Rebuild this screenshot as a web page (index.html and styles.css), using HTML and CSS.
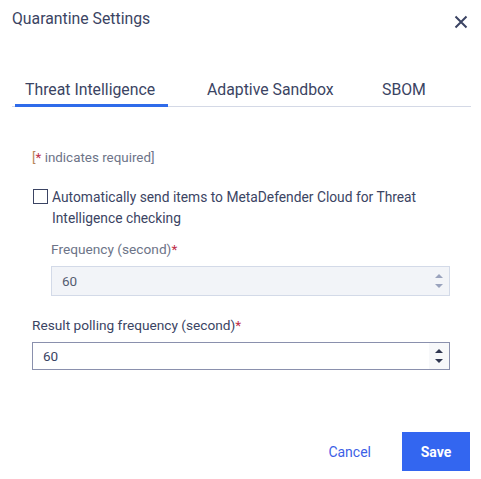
FILE: index.html
```html
<!DOCTYPE html>
<html>
<head>
<meta charset="utf-8">
<link rel="stylesheet" href="styles.css">
</head>
<body>
<div class="dialog">
  <div class="header">
    <div class="title">Quarantine Settings</div>
    <svg class="close" width="14" height="14" viewBox="0 0 14 14"><path d="M1.5 1.5L12.5 12.5M12.5 1.5L1.5 12.5" stroke="#3b4463" stroke-width="2" stroke-linecap="butt"/></svg>
  </div>
  <div class="tabs">
    <div class="tab active">Threat Intelligence</div>
    <div class="tab">Adaptive Sandbox</div>
    <div class="tab">SBOM</div>
  </div>
  <div class="body">
    <div class="req"><span class="br">[</span><span class="star">*</span> indicates required]</div>
    <label class="check">
      <span class="box"></span>
      <span class="check-text">Automatically send items to MetaDefender Cloud for Threat Intelligence checking</span>
    </label>
    <div class="sub">
      <div class="label muted">Frequency (second)<span class="star">*</span></div>
      <div class="input disabled"><span>60</span><span class="spin"><svg width="10" height="20" viewBox="0 0 10 20"><path d="M1 7L5 3L9 7Z" fill="#9aa3bd"/><path d="M1 13L5 17L9 13Z" fill="#9aa3bd"/></svg></span></div>
    </div>
    <div class="label">Result polling frequency (second)<span class="star">*</span></div>
    <div class="input active-input"><span>60</span><span class="spin grey"><svg width="10" height="20" viewBox="0 0 10 20"><path d="M1 7L5 3L9 7Z" fill="#2f3650"/><path d="M1 13L5 17L9 13Z" fill="#2f3650"/></svg></span></div>
  </div>
  <div class="footer">
    <button class="btn-link">Cancel</button>
    <button class="btn-primary">Save</button>
  </div>
</div>
</body>
</html>
```
FILE: styles.css
```css
* { box-sizing: border-box; }
html, body { margin: 0; padding: 0; background: #fff; }
body { font-family: Roboto, "Noto Sans", sans-serif; color: #3b4463; width: 481px; height: 479px; overflow: hidden; }
.dialog { display: flex; flex-direction: column; height: 479px; }
.header { display: flex; justify-content: space-between; align-items: center; padding: 8px 13px 0 12px; height: 30px; }
.title { font-size: 15.8px; line-height: 20px; color: #3b4463; }
.close { margin-top: 6px; }
.tabs { display: flex; margin: 50px 10px 0 12px; border-bottom: 1px solid #d4d9e6; height: 27px; }
.tab { font-size: 15.8px; line-height: 20px; padding: 0 10px 0 0; color: #3b4463; position: relative; }
.tab:nth-child(1) { padding-left: 13px; width: 156px; }
.tab:nth-child(2) { margin-left: 39px; width: 175px; }
.tab.active::after { content: ""; position: absolute; left: 3px; right: 0; bottom: -1px; height: 3px; background: #2f6bea; }
.body { padding: 43px 31px 0 32px; }
.req { font-size: 13.4px; color: #6d7488; line-height: 16px; }
.br { color: #b9865a; }
.star { color: #c0304a; }
.check { display: flex; gap: 4px; margin-top: 21px; align-items: flex-start; }
.box { width: 15px; height: 15px; border: 1px solid #3b4463; flex: none; margin-top: 2px; margin-left: 1px; }
.check-text { font-size: 13.8px; line-height: 21px; color: #3b4463; }
.sub { padding-left: 19px; margin-top: 10px; }
.label { font-size: 13.7px; line-height: 20px; color: #3b4463; margin-top: 19px; }
.sub .label { margin-top: 0; }
.muted { color: #6d7488; }
.input { display: flex; justify-content: space-between; align-items: stretch; height: 30px; border: 1px solid #d3dae8; font-size: 13.5px; color: #3b4463; margin-top: 7px; }
.input > span:first-child { padding-left: 10px; line-height: 28px; }
.input.disabled { background: #f2f4f8; color: #555c70; }
.active-input { border-color: #8a90ad; height: 28px; margin-top: 7px; }
.active-input > span:first-child { line-height: 26px; }
.spin { width: 20px; display: flex; align-items: center; justify-content: center; }
.spin.grey { background: #f7f8fa; }
.footer { margin-top: auto; display: flex; justify-content: flex-end; align-items: center; padding: 0 11px 8px 0; gap: 31px; }
button { font-family: inherit; border: none; cursor: pointer; }
.btn-link { background: none; color: #3d5fe6; font-size: 14px; padding: 0; }
.btn-primary { background: #3366f0; color: #fff; font-size: 14px; font-weight: bold; width: 68px; height: 39px; }
```
